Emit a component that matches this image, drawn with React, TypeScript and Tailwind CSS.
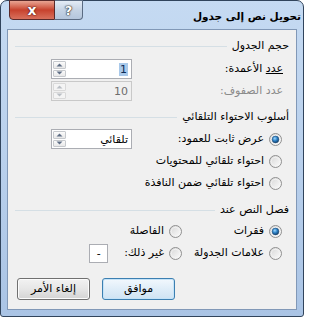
import React from "react";

const font = { fontFamily: '"DejaVu Sans", "Noto Sans", sans-serif' };

function Radio({ checked }: { checked?: boolean }) {
  return (
    <svg width="13" height="13" viewBox="0 0 13 13" className="shrink-0">
      <defs>
        <linearGradient id="rg" x1="0" y1="0" x2="1" y2="1">
          <stop offset="0" stopColor="#d4d4d4" />
          <stop offset="1" stopColor="#ffffff" />
        </linearGradient>
        <radialGradient id="dot" cx="0.4" cy="0.35" r="0.7">
          <stop offset="0" stopColor="#9fd8ff" />
          <stop offset="0.5" stopColor="#2a7fc4" />
          <stop offset="1" stopColor="#12375e" />
        </radialGradient>
      </defs>
      <circle cx="6.5" cy="6.5" r="6" fill="url(#rg)" stroke="#8f8f8f" strokeWidth="1" />
      <circle cx="6.5" cy="6.5" r="4.2" fill="none" stroke="#f4f4f4" strokeWidth="0.8" />
      {checked && <circle cx="6.5" cy="6.5" r="3.4" fill="url(#dot)" stroke="#1d4a77" strokeWidth="0.5" />}
    </svg>
  );
}

function Arrow({ up, disabled }: { up?: boolean; disabled?: boolean }) {
  return (
    <svg width="7" height="4" viewBox="0 0 7 4">
      <path
        d={up ? "M0.5 3.5 L3.5 0.5 L6.5 3.5 Z" : "M0.5 0.5 L3.5 3.5 L6.5 0.5 Z"}
        fill={disabled ? "#b9bec4" : "#5f6e85"}
      />
    </svg>
  );
}

function Spin({ value, disabled, selected }: { value: string; disabled?: boolean; selected?: boolean }) {
  return (
    <div
      className={`w-[81px] h-[20px] border flex ${
        disabled ? "border-[#c9c9c9] bg-[#f0f0f0]" : "border-[#abadb3] bg-white"
      }`}
    >
      <div className="flex-1 flex items-center pr-[3px]">
        <span
          className={`text-[11px] leading-[13px] ${
            disabled ? "text-[#6d6d6d]" : selected ? "bg-[#a9c9ea] text-[#0c2a55] px-[1px]" : "text-black"
          }`}
        >
          {value}
        </span>
      </div>
      <div className="w-[15px] flex flex-col p-[1px] gap-[1px]">
        <div
          className={`flex-1 flex items-center justify-center border rounded-[1px] ${
            disabled ? "border-[#d9d9d9] bg-[#f4f4f4]" : "border-[#c6c9cd] bg-gradient-to-b from-[#fbfbfb] to-[#e8e8e8]"
          }`}
        >
          <Arrow up disabled={disabled} />
        </div>
        <div
          className={`flex-1 flex items-center justify-center border rounded-[1px] ${
            disabled ? "border-[#d9d9d9] bg-[#f4f4f4]" : "border-[#c6c9cd] bg-gradient-to-b from-[#fbfbfb] to-[#e8e8e8]"
          }`}
        >
          <Arrow disabled={disabled} />
        </div>
      </div>
    </div>
  );
}

function Header({ text }: { text: string }) {
  return (
    <div className="h-[18px] flex items-center pr-[7px] pl-[7px] gap-[5px]">
      <span className="text-[11px] text-black whitespace-nowrap">{text}</span>
      <div className="flex-1 h-[1px] bg-[#d5dfe5]" />
    </div>
  );
}

function RadioRow({ checked, children }: { checked?: boolean; children: React.ReactNode }) {
  return (
    <div className="flex items-center gap-[5px]">
      <Radio checked={checked} />
      <span className="text-[11px] text-black whitespace-nowrap">{children}</span>
    </div>
  );
}

export default function App() {
  return (
    <div className="w-[304px] h-[317px] bg-white" style={font} dir="rtl">
      <div className="w-[304px] h-[317px] border border-[#31445c] rounded-t-[7px] rounded-b-[3px] bg-gradient-to-b from-[#c5daf2] via-[#b9d0ec] to-[#aac4e5] flex flex-col px-[6px] pb-[6px]">
        {/* title bar */}
        <div className="h-[28px] flex items-start justify-between shrink-0">
          <div className="pt-[8px] text-[10.5px] font-bold text-black whitespace-nowrap mr-[-4px]">
            تحويل نص إلى جدول
          </div>
          <div className="flex ml-[2px] mt-[-1px]">
            <div className="w-[28px] h-[20px] rounded-br-[4px] border border-[#5a6b82] border-l-0 bg-gradient-to-b from-[#e4ecf6] via-[#c5d3e4] to-[#b4c6dc] flex items-center justify-center">
              <span className="text-[13px] font-bold text-white leading-none" style={{ textShadow: "0 0 1px #333, 0 0 1px #333, 0 0 2px #333" }}>
                ?
              </span>
            </div>
            <div className="w-[46px] h-[20px] rounded-bl-[4px] border border-[#5a2a2a] bg-gradient-to-b from-[#e8a493] via-[#c7412d] to-[#d8705c] flex items-center justify-center">
              <span className="text-[14px] font-bold text-white leading-none" style={{ textShadow: "0 0 1px #4a1010, 0 0 2px #4a1010" }}>
                x
              </span>
            </div>
          </div>
        </div>
        {/* client */}
        <div className="flex-1 border border-[#8198b7] bg-[#f0f0f0] flex flex-col pt-[7px]">
          <Header text="حجم الجدول" />
          <div className="h-[22px] mt-[3px] flex items-center justify-between pr-[13px] pl-[43px]">
            <span className="text-[11px] text-black">
              <span className="underline">عدد</span> الأعمدة:
            </span>
            <Spin value="1" selected />
          </div>
          <div className="h-[22px] flex items-center justify-between pr-[13px] pl-[43px]">
            <span className="text-[11px] text-[#8a8a8a]">عدد الصفوف:</span>
            <Spin value="10" disabled />
          </div>

          <div className="mt-[6px]">
            <Header text="أسلوب الاحتواء التلقائي" />
          </div>
          <div className="h-[22px] mt-[2px] flex items-center justify-between pr-[14px] pl-[43px]">
            <RadioRow checked>عرض ثابت للعمود:</RadioRow>
            <Spin value="تلقائي" />
          </div>
          <div className="h-[22px] flex items-center pr-[14px]">
            <RadioRow>احتواء تلقائي للمحتويات</RadioRow>
          </div>
          <div className="h-[22px] flex items-center pr-[14px]">
            <RadioRow>احتواء تلقائي ضمن النافذة</RadioRow>
          </div>

          <div className="mt-[7px]">
            <Header text="فصل النص عند" />
          </div>
          <div className="h-[22px] mt-[1px] flex items-center pr-[14px]">
            <div className="w-[100px]">
              <RadioRow checked>فقرات</RadioRow>
            </div>
            <RadioRow>الفاصلة</RadioRow>
          </div>
          <div className="h-[22px] flex items-center pr-[14px]">
            <div className="w-[100px]">
              <RadioRow>علامات الجدولة</RadioRow>
            </div>
            <RadioRow>غير ذلك:</RadioRow>
            <div className="mr-[16px] w-[19px] h-[19px] border border-[#abadb3] bg-white flex items-center justify-center text-[11px] text-black leading-none">
              -
            </div>
          </div>

          <div className="flex justify-end gap-[12px] pl-[9px] mt-[14px]">
            <div className="w-[73px] h-[22px] rounded-[3px] border border-[#3c7fb1] bg-gradient-to-b from-[#f2f8fd] via-[#dfedf8] to-[#cfe3f3] flex items-center justify-center shadow-[inset_0_0_0_1px_#c5e3f8] text-[11px] text-black">
              موافق
            </div>
            <div className="w-[73px] h-[22px] rounded-[3px] border border-[#707070] bg-gradient-to-b from-[#f2f2f2] via-[#e6e6e6] to-[#d4d4d4] flex items-center justify-center shadow-[inset_0_0_0_1px_#fcfcfc] text-[11px] text-black">
              إلغاء الأمر
            </div>
          </div>
        </div>
      </div>
    </div>
  );
}
